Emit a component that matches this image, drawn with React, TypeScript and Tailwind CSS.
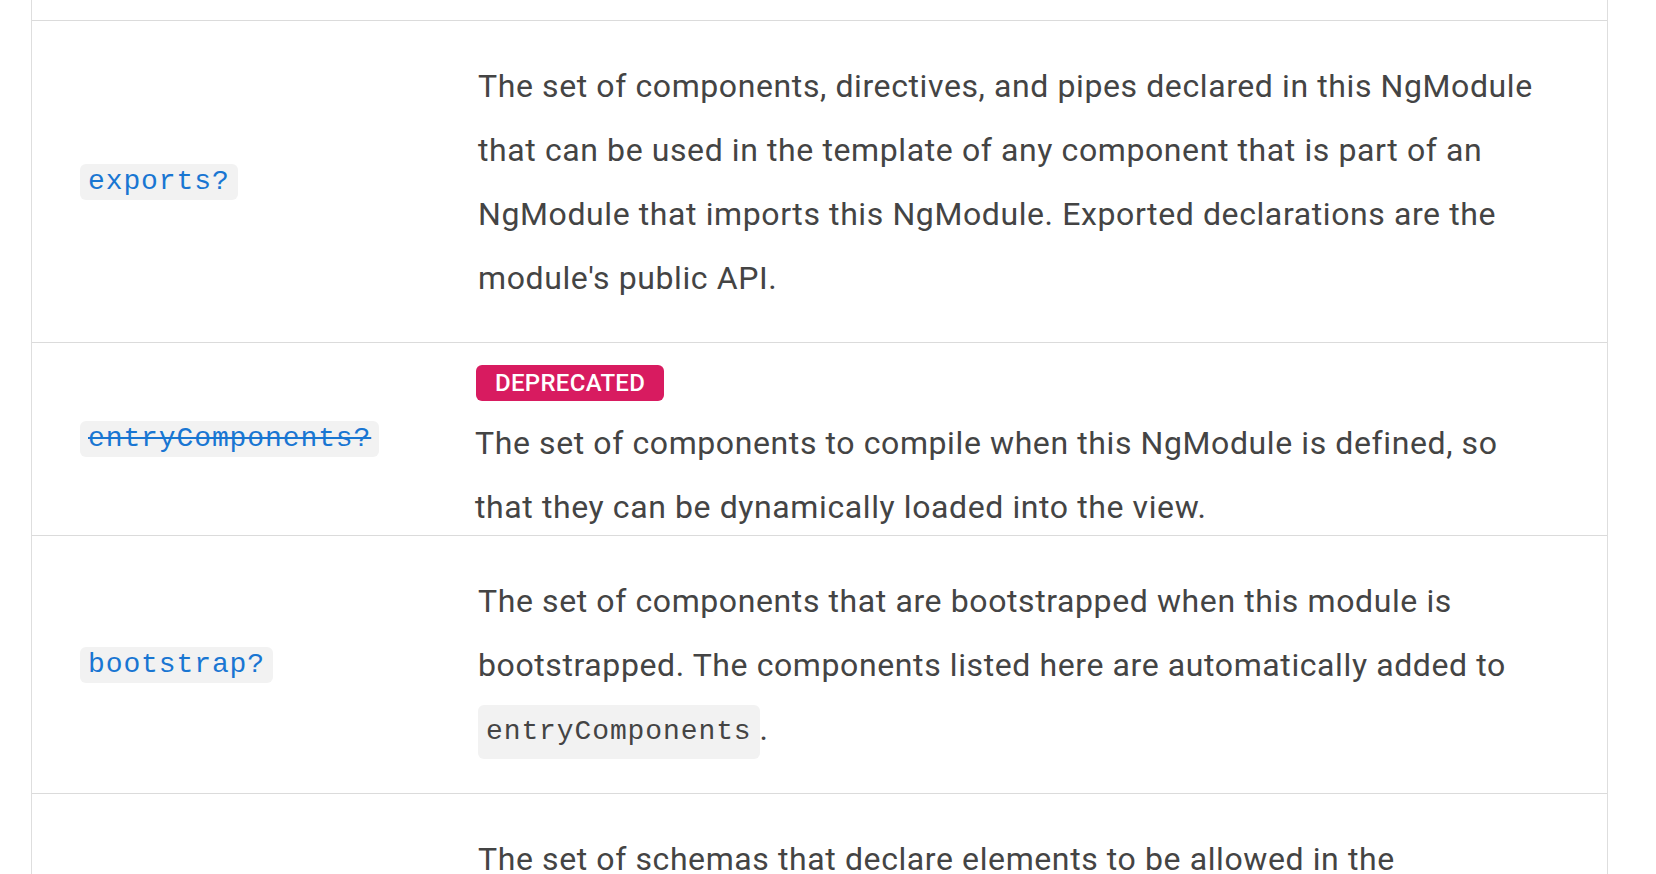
import React from 'react';

const mono = "font-['Liberation_Mono',_'DejaVu_Sans_Mono',_monospace]";

function ApiName({ name, deprecated }: { name: string; deprecated?: boolean }) {
    return (
        <code
            className={`${mono} inline-block px-[8px] leading-[36px] text-[28px] tracking-[0.9px] rounded-[6px] bg-[#f2f2f2] text-[#1976d2] ${deprecated ? 'line-through' : ''}`}
        >
            {name}
        </code>
    );
}

function Row({ name, deprecated, children }: { name: string; deprecated?: boolean; children: React.ReactNode }) {
    return (
        <div className="grid grid-cols-[446px_1fr] border-t border-[#dbdbdb]">
            <div className="flex items-center pl-[48px]">
                <ApiName name={name} deprecated={deprecated} />
            </div>
            {deprecated ? (
                <div className="flex flex-col items-start pt-[22px]">
                    <span className="-ml-[2px] px-[19px] h-[36px] leading-[36px] rounded-[6px] bg-[#d81b60] text-white text-[24px] font-medium tracking-[0.3px]">
                        DEPRECATED
                    </span>
                    <p className="-ml-[3px] mt-[10px] -mb-[4px] max-w-[1070px]">{children}</p>
                </div>
            ) : (
                <div className="pt-[33px] pb-[32px]">
                    <p className="max-w-[1070px]">{children}</p>
                </div>
            )}
        </div>
    );
}

export default function App() {
    return (
        <div className="h-screen overflow-hidden bg-white font-['Roboto',_'Noto_Sans',_sans-serif] text-[32px] leading-[64px] tracking-[0.6px] text-[#444]">
            <div className="ml-[31px] mr-[48px] border-x border-[#dedede]">
                {/* tail of the previous row */}
                <div className="h-[20px]" />

                <Row name="exports?">
                    The set of components, directives, and pipes declared in this NgModule that can be used in the
                    template of any component that is part of an NgModule that imports this NgModule. Exported
                    declarations are the module's public API.
                </Row>

                <Row name="entryComponents?" deprecated>
                    The set of components to compile when this NgModule is defined, so that they can be dynamically
                    loaded into the view.
                </Row>

                <Row name="bootstrap?">
                    The set of components that are bootstrapped when this module is bootstrapped. The components listed
                    here are automatically added to{' '}
                    <code className={`${mono} inline-block align-middle px-[8px] leading-[54px] text-[28px] tracking-[0.9px] rounded-[6px] bg-[#f2f2f2]`}>
                        entryComponents
                    </code>
                    .
                </Row>

                <Row name="schemas?">
                    The set of schemas that declare elements to be allowed in the NgModule. Elements that are neither
                    Angular components nor directives must be declared in a schema.
                </Row>
            </div>
        </div>
    );
}
